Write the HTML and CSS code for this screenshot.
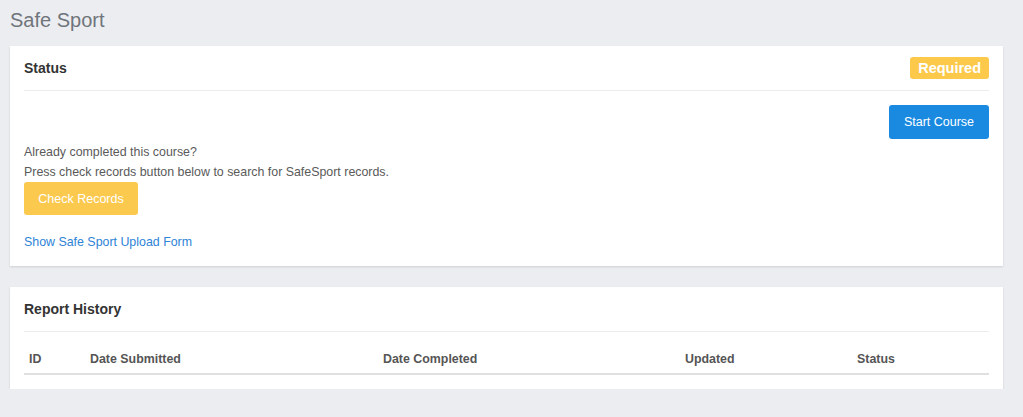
FILE: index.html
```html
<!DOCTYPE html>
<html>
<head>
<meta charset="utf-8">
<link rel="stylesheet" href="styles.css">
</head>
<body>
<div class="page">
  <h1 class="title">Safe Sport</h1>
  <div class="card">
    <div class="card-head">
      <span class="card-title">Status</span>
      <span class="badge">Required</span>
    </div>
    <div class="card-body">
      <div class="actions-right"><button class="btn btn-blue">Start Course</button></div>
      <p class="text first">Already completed this course?</p>
      <p class="text">Press check records button below to search for SafeSport records.</p>
      <button class="btn btn-yellow">Check Records</button>
      <a class="link" href="#">Show Safe Sport Upload Form</a>
    </div>
  </div>
  <div class="card card2">
    <div class="card-head">
      <span class="card-title">Report History</span>
    </div>
    <table class="table">
      <thead>
        <tr>
          <th class="c-id">ID</th>
          <th class="c-sub">Date Submitted</th>
          <th class="c-comp">Date Completed</th>
          <th class="c-upd">Updated</th>
          <th class="c-st">Status</th>
        </tr>
      </thead>
    </table>
  </div>
</div>
</body>
</html>
```
FILE: styles.css
```css
html, body {
  margin: 0;
  padding: 0;
  background: #ecedf1;
  font-family: "Liberation Sans", Arial, sans-serif;
}
.page {
  padding: 0 20px 0 10px;
}
.title {
  margin: 0;
  padding-top: 7px;
  height: 46px;
  box-sizing: border-box;
  font-size: 20px;
  font-weight: normal;
  color: #6f757b;
  line-height: 26px;
}
.card {
  background: #fff;
  padding: 0 14px;
  box-shadow: 0 1px 2px rgba(0,0,0,0.12);
}
.card2 {
  margin-top: 21px;
  padding-bottom: 14px;
}
.card-head {
  display: flex;
  justify-content: space-between;
  align-items: center;
  height: 44px;
  border-bottom: 1px solid #ececec;
}
.card-title {
  font-size: 14px;
  font-weight: bold;
  color: #333;
}
.badge {
  background: #fcc94b;
  color: #fff;
  font-weight: bold;
  font-size: 14.5px;
  padding: 0 8px;
  height: 22px;
  line-height: 22px;
  border-radius: 3px;
}
.card-body {
  padding: 14px 0 16px;
  display: flex;
  flex-direction: column;
  align-items: flex-start;
}
.actions-right {
  align-self: stretch;
  display: flex;
  justify-content: flex-end;
}
.btn {
  border: none;
  border-radius: 3px;
  color: #fff;
  font-family: "Liberation Sans", Arial, sans-serif;
  font-size: 12.5px;
  height: 34px;
  cursor: pointer;
}
.btn-blue {
  background: #1a8ae1;
  width: 100px;
}
.btn-yellow {
  background: #fbc94d;
  width: 114px;
  height: 33px;
}
.text {
  margin: 0;
  font-size: 12.4px;
  line-height: 20px;
  color: #5a5a5a;
}
.text.first {
  margin-top: 3px;
}
.link {
  margin-top: 20px;
  font-size: 12.4px;
  color: #2d83d6;
  text-decoration: none;
  line-height: 15px;
}
.table {
  width: 100%;
  border-collapse: collapse;
  margin-top: 15px;
}
.table th {
  text-align: left;
  font-size: 12.4px;
  font-weight: bold;
  color: #555;
  padding: 5px 5px 7px;
  height: 14px;
  border-bottom: 2px solid #e0e0e0;
}
.c-id { width: 51px; }
.c-sub { width: 283px; }
.c-comp { width: 292px; }
.c-upd { width: 162px; }
```
